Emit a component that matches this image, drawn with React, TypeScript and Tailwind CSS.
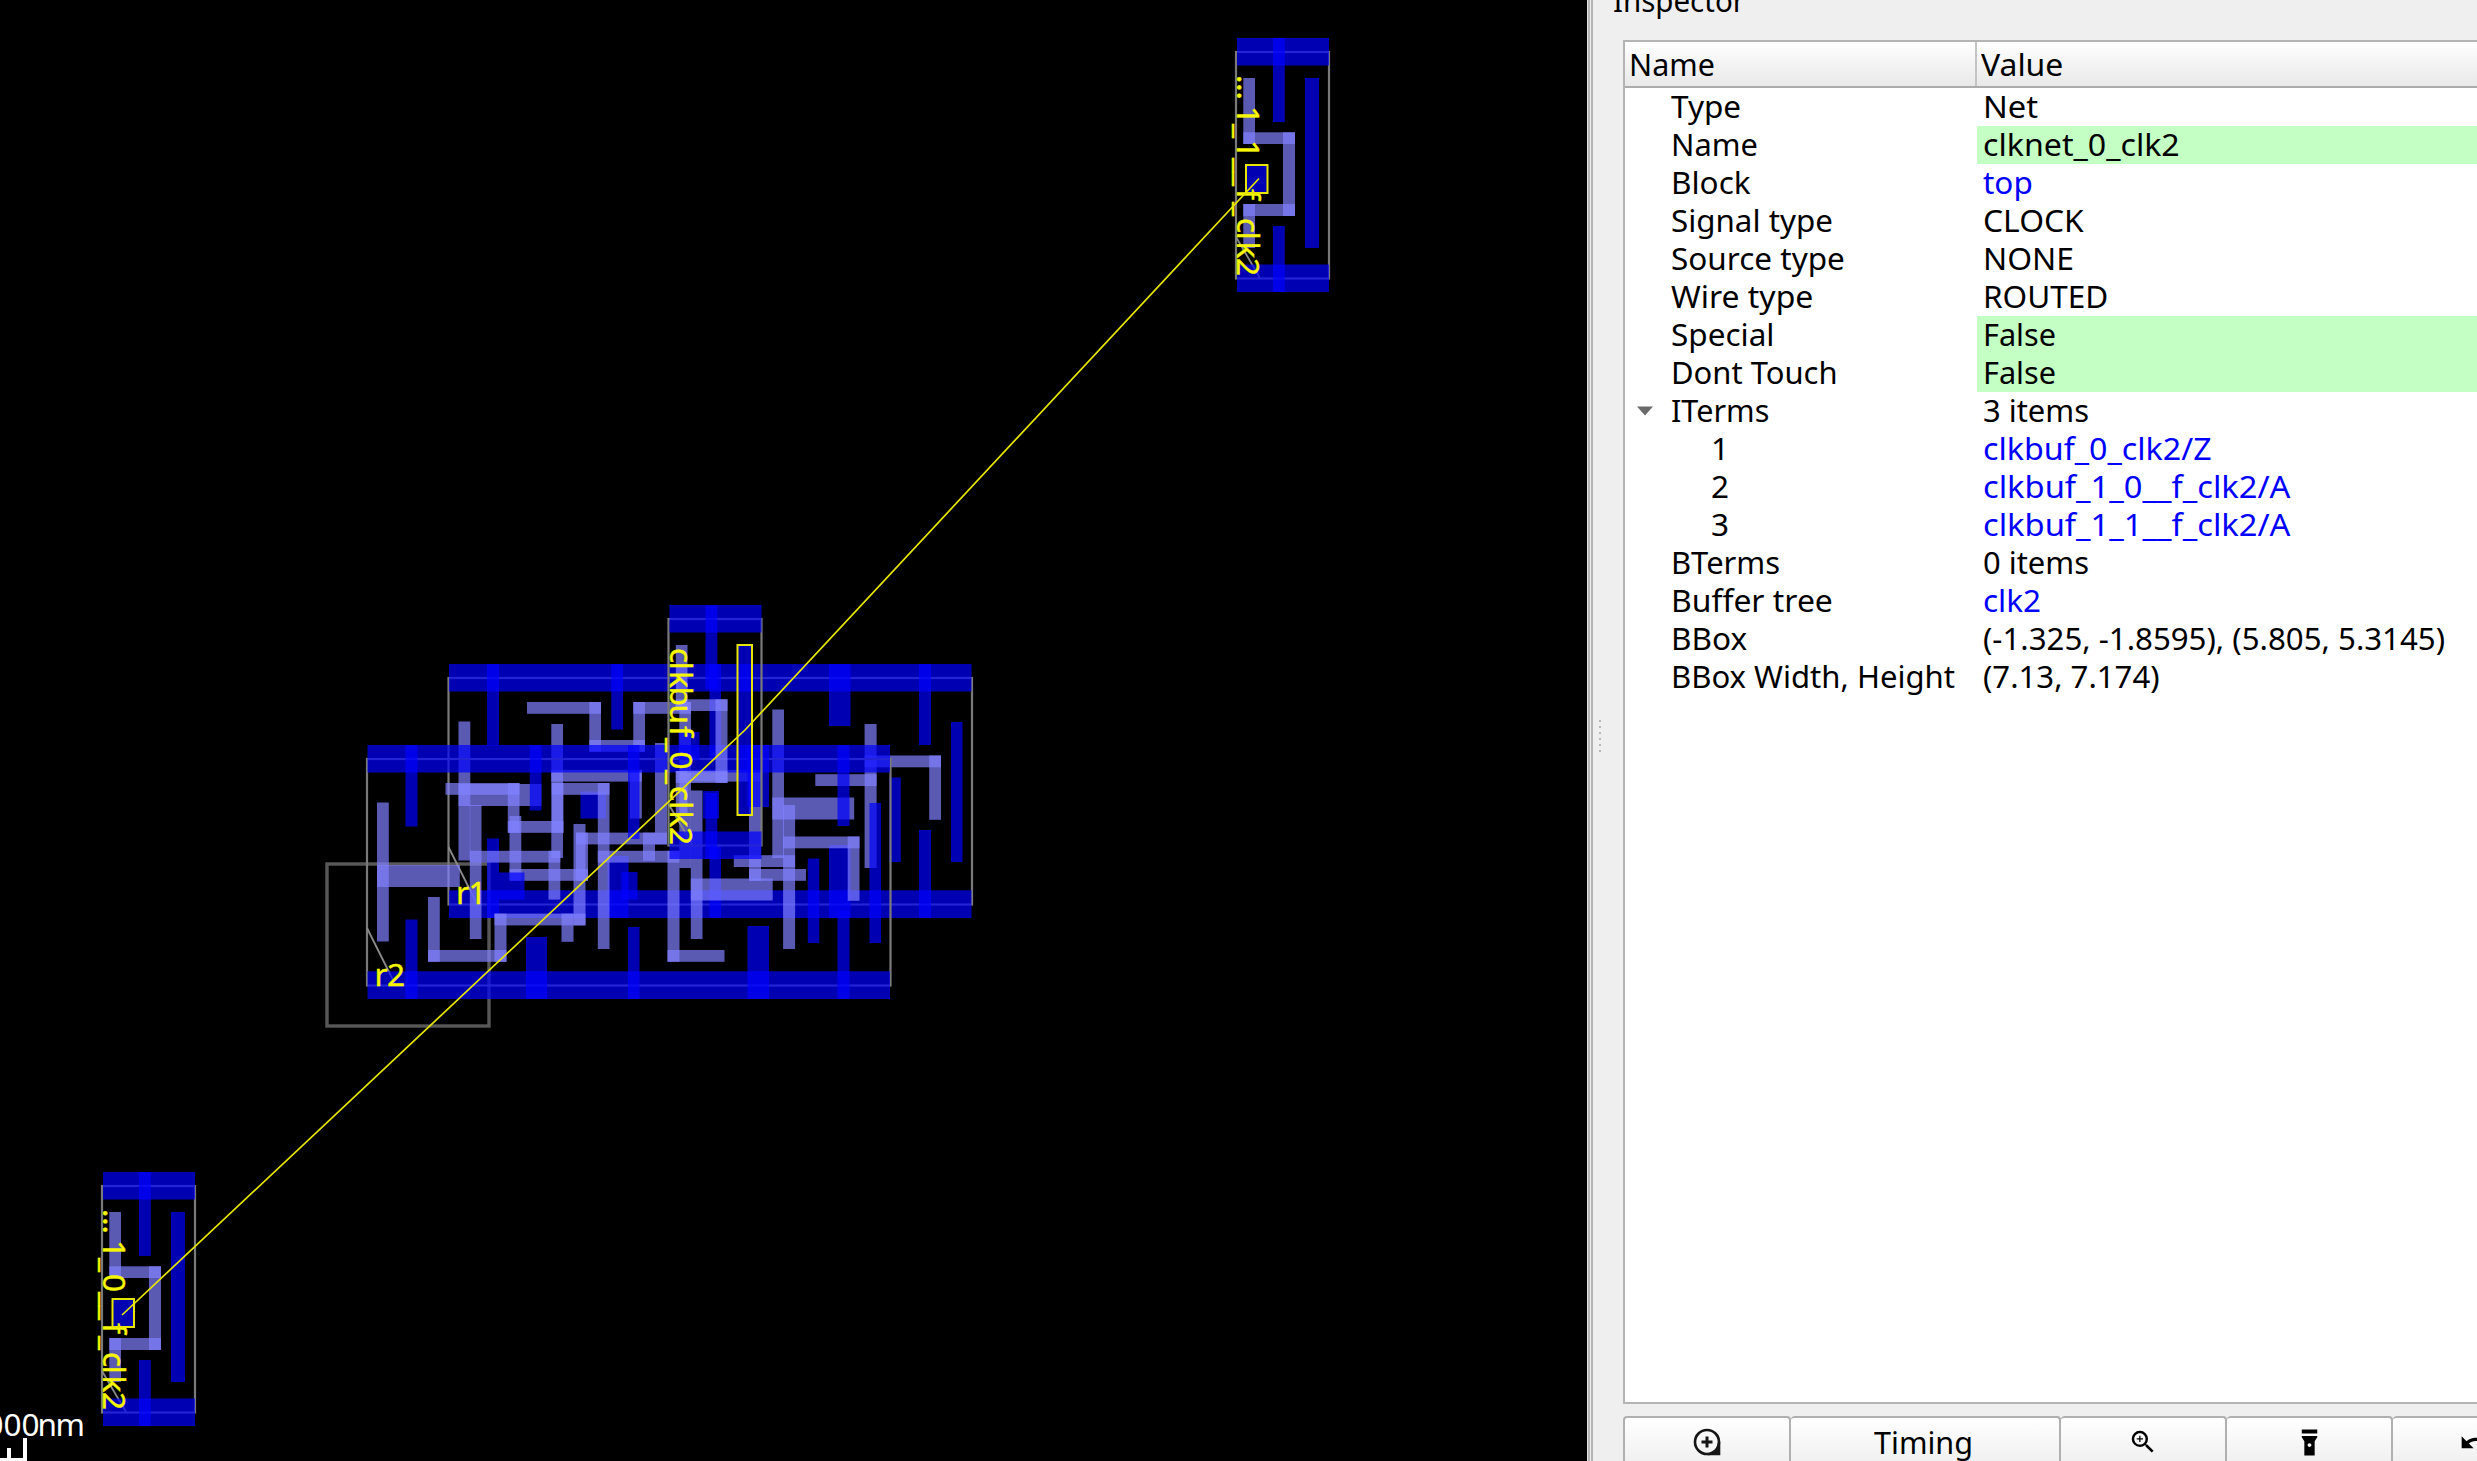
import { useLayoutEffect, useRef, useState } from "react";
import { MdFlashlightOn, MdUndo, MdZoomIn } from "react-icons/md";

type Box = [number, number, number, number]; // x1, y1, x2, y2

const METAL = "rgba(0,0,255,0.7)";
const POLY = "rgba(128,128,255,0.7)";
const FONT = "'Noto Sans', 'Open Sans', sans-serif";

/* Flip-flop cell, in the coordinates of instance r1. */
const ffMetal: Box[] = [
  [449, 664, 971.5, 691.5],
  [449, 890.3, 971.5, 918],
  [487, 664, 499, 745.5],
  [487, 838.5, 499, 918],
  [611.3, 664, 623, 729.5],
  [607.5, 856, 628.5, 918],
  [580.5, 791.5, 606, 818.5],
  [703, 791, 719, 818.5],
  [709.5, 664, 721, 758],
  [709.5, 846, 721, 918],
  [829, 664, 850.5, 726],
  [829, 845, 850.5, 918],
  [919, 664, 931, 745],
  [919, 830, 931, 918],
  [951, 722, 962.5, 862],
  [889.3, 777.5, 900.8, 862],
];
const ffPoly: Box[] = [
  [458.5, 721.5, 470.3, 860.5],
  [458.5, 784, 541.3, 806],
  [527, 702, 601, 713.8],
  [589.3, 702, 601, 751.8],
  [589.3, 740, 645, 751.8],
  [633.3, 702, 645, 751.8],
  [633.3, 702, 691, 713.8],
  [679.3, 702, 691, 868],
  [551.3, 724, 563, 858],
  [551.3, 769.8, 641.8, 781.6],
  [630, 769.8, 641.8, 818.6],
  [509.5, 816, 521.3, 880.8],
  [509.5, 869, 588, 880.8],
  [576, 832.6, 588, 880.8],
  [576, 832.6, 667, 844.4],
  [655, 743, 667, 844.4],
  [643, 832.6, 655, 860.8],
  [679.3, 769.8, 761, 781.6],
  [749, 769.8, 761, 880.8],
  [749, 869, 806, 880.8],
  [772.3, 709.5, 784, 858],
  [772.3, 797.5, 854.2, 819.5],
  [864.6, 724, 876.6, 868],
  [815.3, 774.2, 876.6, 786],
  [864.6, 755.5, 941, 767.3],
  [929.2, 755.5, 941, 819.8],
];

/* Clock buffer cell, in the coordinates of the upper right instance. */
const bufMetal: Box[] = [
  [1237, 38, 1329, 65.5],
  [1237, 264.5, 1329, 292],
  [1273, 38, 1284.8, 122],
  [1273, 226, 1284.8, 292],
  [1305, 78, 1319, 248],
  [1246, 165, 1267, 193],
];
const bufPoly: Box[] = [
  [1243.3, 78, 1255, 144],
  [1243.3, 132.3, 1295, 144],
  [1283, 132.3, 1295, 216],
  [1243.3, 204, 1295, 216],
  [1243.3, 204, 1255, 248],
];

function Shapes({ boxes, fill }: { boxes: Box[]; fill: string }) {
  return (
    <>
      {boxes.map(([a, b, c, d], i) => (
        <rect key={i} x={a} y={b} width={c - a} height={d - b} fill={fill} />
      ))}
    </>
  );
}

function FlipFlop({ dx = 0, dy = 0 }: { dx?: number; dy?: number }) {
  return (
    <g transform={`translate(${dx} ${dy})`}>
      <rect x={448.5} y={678} width={523.5} height={226.5} fill="none" stroke="#7a7a7a" strokeWidth={2.2} />
      <path d="M448.5 847 L477 904" stroke="#8a8a8a" strokeWidth={1.8} />
      <Shapes boxes={ffMetal} fill={METAL} />
      <Shapes boxes={ffPoly} fill={POLY} />
    </g>
  );
}

function Buffer({ dx = 0, dy = 0 }: { dx?: number; dy?: number }) {
  return (
    <g transform={`translate(${dx} ${dy})`}>
      <rect x={1236} y={52} width={93} height={226.5} fill="none" stroke="#7a7a7a" strokeWidth={2.2} />
      <path d="M1236 237 L1260 278" stroke="#8a8a8a" strokeWidth={1.8} />
      <Shapes boxes={bufMetal} fill={METAL} />
      <Shapes boxes={bufPoly} fill={POLY} />
    </g>
  );
}

/* Instance name; `xs` holds the pen position of each glyph along the baseline. */
function Label({ x, y, xs, vertical, children }: { x: number; y: number; xs: string; vertical?: boolean; children: string }) {
  return (
    <text
      transform={`translate(${x} ${y})${vertical ? " rotate(90)" : ""}`}
      x={xs}
      fill="#f6f600"
      stroke="#f6f600"
      strokeWidth={0.4}
      fontFamily={FONT}
      fontSize={31.5}
    >
      {children}
    </text>
  );
}

function LayoutView() {
  return (
    <svg className="block shrink-0" width={1587} height={1461} viewBox="0 0 1587 1461">
      <rect width={1587} height={1461} fill="#000" />
      <rect x={327} y={864} width={162} height={162} fill="none" stroke="#585858" strokeWidth={3.4} />
      <FlipFlop />
      <FlipFlop dx={-81.5} dy={81} />
      <Buffer dx={-567.5} dy={567} />
      <Buffer />
      <Buffer dx={-1134} dy={1134} />
      <Label x={456} y={903.5} xs="0 12.5">r1</Label>
      <Label x={374.5} y={985.5} xs="0 12.5">r2</Label>
      <Label x={669.5} y={648} xs="0 13.5 23 38.5 56.5 78 90 103.5 122 138 153 162.5 179" vertical>clkbuf_0_clk2</Label>
      <Label x={1236.5} y={75} xs="0 31 49 65 83 97 114 127 143 156.5 166.5 183" vertical>…1_1__f_clk2</Label>
      <Label x={103} y={1209} xs="0 31 49 65 83 97 114 127 143 156.5 166.5 183" vertical>…1_0__f_clk2</Label>
      <g fill="none" stroke="#e6e600" strokeWidth={2}>
        <rect x={737.5} y={645} width={14.5} height={170} />
        <rect x={1246} y={165} width={21.5} height={28} />
        <rect x={112.5} y={1299} width={21.5} height={28} />
        <path d="M1259 178.5 L745 730 L122 1315" strokeWidth={1.7} />
      </g>
      <text y={1435.5} x="-32.5 -14.5 3.5 21.5 37.5 55.5" fill="#fff" fontFamily={FONT} fontSize={31.5}>
        1000nm
      </text>
      <path d="M7 1448 H11 V1458 H23 V1438 H27 V1461 H0 V1458 H7 Z" fill="#fff" />
    </svg>
  );
}

/* Text condensed or stretched to a given advance width. */
function Fit({ w, children }: { w: number; children: string }) {
  const ref = useRef<HTMLSpanElement>(null);
  const [scale, setScale] = useState(1);
  useLayoutEffect(() => {
    if (ref.current) setScale(w / ref.current.offsetWidth);
  }, [w, children]);
  return (
    <span ref={ref} className="inline-block origin-left whitespace-pre" style={{ transform: `scaleX(${scale})` }}>
      {children}
    </span>
  );
}

type Row = { name: string; nw: number; value: string; vw: number; link?: boolean; green?: boolean; child?: boolean; open?: boolean };

const rows: Row[] = [
  { name: "Type", nw: 70, value: "Net", vw: 55 },
  { name: "Name", nw: 87, value: "clknet_0_clk2", vw: 197, green: true },
  { name: "Block", nw: 80, value: "top", vw: 50, link: true },
  { name: "Signal type", nw: 162, value: "CLOCK", vw: 101 },
  { name: "Source type", nw: 174, value: "NONE", vw: 91 },
  { name: "Wire type", nw: 142, value: "ROUTED", vw: 125 },
  { name: "Special", nw: 103, value: "False", vw: 73, green: true },
  { name: "Dont Touch", nw: 167, value: "False", vw: 73, green: true },
  { name: "ITerms", nw: 98, value: "3 items", vw: 106, open: true },
  { name: "1", nw: 18, value: "clkbuf_0_clk2/Z", vw: 229, link: true, child: true },
  { name: "2", nw: 18, value: "clkbuf_1_0__f_clk2/A", vw: 307, link: true, child: true },
  { name: "3", nw: 18, value: "clkbuf_1_1__f_clk2/A", vw: 307, link: true, child: true },
  { name: "BTerms", nw: 109, value: "0 items", vw: 106 },
  { name: "Buffer tree", nw: 162, value: "clk2", vw: 58, link: true },
  { name: "BBox", nw: 76, value: "(-1.325, -1.8595), (5.805, 5.3145)", vw: 462 },
  { name: "BBox Width, Height", nw: 284, value: "(7.13, 7.174)", vw: 177 },
];

function ZoomToIcon() {
  return (
    <svg width={28} height={28} viewBox="0 0 28 28" fill="none" stroke="#161616" strokeWidth={2.6}>
      <circle cx={14} cy={14} r={12} />
      <path d="M14 8.5 V19.5 M8.5 14 H19.5" strokeWidth={3} />
      <path d="M27.3 14 V27.3 H14 Q23 26 25 14 Z" fill="#161616" stroke="none" />
    </svg>
  );
}

const button =
  "flex h-[60px] shrink-0 items-start justify-center rounded-t-[4px] border-t-2 border-r-2 border-[#b0b0b0] bg-linear-to-b from-white to-[#ececec]";

export default function App() {
  return (
    <div className="flex h-[1461px] w-[2477px] overflow-hidden bg-[#efefef] font-['Noto_Sans','Open_Sans',sans-serif] text-[31.5px] leading-[35px] text-black">
      <LayoutView />
      <div className="flex w-[36px] shrink-0 items-center border-l border-[#e2e2e2]">
        <div className="h-full w-[5px] border-r-2 border-l-2 border-[#b4b4b4] bg-[#efefef]" />
        <div className="ml-[6px] flex flex-col gap-[4px] pt-[10px]">
          {[0, 1, 2, 3, 4, 5].map((i) => (
            <div key={i} className="size-[2px] bg-[#b8b8b8]" />
          ))}
        </div>
      </div>
      <div className="flex min-w-0 flex-1 flex-col">
        <div className="-mt-[18px] -ml-[10px] h-[58px] shrink-0">
          <Fit w={132}>Inspector</Fit>
        </div>
        <div className="h-[1364px] shrink-0 border-2 border-r-0 border-[#b4b4b4] bg-white">
          <div className="flex h-[46px] border-b-2 border-[#acacac] bg-linear-to-b from-white to-[#e9e9e9] leading-[43px]">
            <div className="w-[352px] shrink-0 border-r-2 border-[#c4c4c4] pl-[4px]">
              <Fit w={86}>Name</Fit>
            </div>
            <div className="pl-[4px]">
              <Fit w={82}>Value</Fit>
            </div>
          </div>
          {rows.map((r, i) => (
            <div key={i} className="flex h-[38px]">
              <div className="flex w-[352px] shrink-0">
                <div className="flex w-[46px] shrink-0 items-center pl-[12px]">
                  {r.open && (
                    <svg width={16} height={10} viewBox="0 0 16 10">
                      <path d="M0 0.5 H16 L8 9.5 Z" fill="#6a6a6a" />
                    </svg>
                  )}
                </div>
                <div className={r.child ? "pl-[40px]" : ""}>
                  <Fit w={r.nw}>{r.name}</Fit>
                </div>
              </div>
              <div className={`flex-1 pl-[6px] ${r.green ? "bg-[#c4ffc4]" : ""} ${r.link ? "text-[#0000ff]" : ""}`}>
                <Fit w={r.vw}>{r.value}</Fit>
              </div>
            </div>
          ))}
        </div>
        <div className="mt-[12px] flex shrink-0">
          <div className={`${button} w-[168px] border-l-2 pt-[10px]`}>
            <ZoomToIcon />
          </div>
          <div className={`${button} w-[270px] pt-[6px]`}>
            <Fit w={99}>Timing</Fit>
          </div>
          <div className={`${button} w-[166px] pt-[9px]`}>
            <MdZoomIn size={30} />
          </div>
          <div className={`${button} w-[166px] pt-[9px]`}>
            <MdFlashlightOn size={31} />
          </div>
          <div className={`${button} w-[166px] pt-[9px]`}>
            <MdUndo size={32} />
          </div>
        </div>
      </div>
    </div>
  );
}
